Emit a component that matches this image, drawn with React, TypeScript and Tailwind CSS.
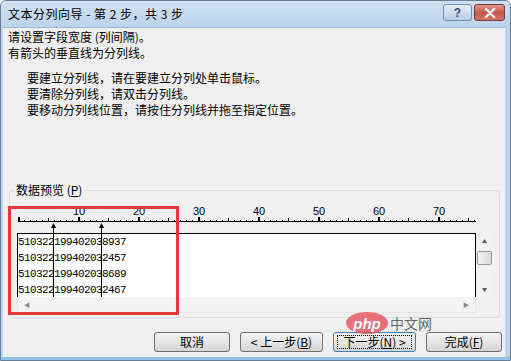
import React from 'react';

const rows = ['510322199402038937', '510322199402032457', '510322199402038689', '510322199402032467'];

// ruler ticks: one per character, 6px apart
function Ruler() {
  const ticks = [];
  for (let i = 0; i <= 76; i++) {
    const x = 2 + i * 6;
    if (i % 10 === 0) {
      ticks.push(<rect key={i} x={x} y={14} width={2} height={4} fill="#000" />);
    } else if (i % 5 === 0) {
      ticks.push(<rect key={i} x={x} y={15} width={1} height={3} fill="#000" />);
    } else {
      ticks.push(<rect key={i} x={x} y={17} width={1} height={1} fill="#000" />);
    }
  }
  const labels = [10, 20, 30, 40, 50, 60, 70];
  return (
    <svg width="462" height="30" className="block">
      <rect x={2} y={18} width={458} height={1} fill="#000" />
      {ticks}
      {labels.map((n) => (
        <text
          key={n}
          x={3 + n * 6}
          y={12}
          textAnchor="middle"
          fontSize="11"
          fontFamily="'Liberation Sans', sans-serif"
          fill="#000"
        >
          {n}
        </text>
      ))}
    </svg>
  );
}

function WinButton({ children, focused, w }: { children: React.ReactNode; focused?: boolean; w: string }) {
  return (
    <button
      className={
        'h-[20px] rounded-[3px] border text-[12px] leading-none text-black flex items-center justify-center bg-gradient-to-b from-[#f4f4f4] via-[#e6e6e6] to-[#d4d4d4] ' +
        w +
        (focused ? ' border-[#3c7fb1]' : ' border-[#707070]')
      }
    >
      {focused ? (
        <span className="border border-dotted border-black h-[14px] flex items-center w-[75px] justify-center">
          {children}
        </span>
      ) : (
        children
      )}
    </button>
  );
}

export default function App() {
  return (
    <div className="relative w-[511px] h-[361px] overflow-hidden bg-[#bcd4ed] border border-[#6a7f97] rounded-t-[6px] font-['Noto_Sans_CJK_SC',sans-serif]">
      {/* Title bar */}
      <div className="h-[26px] flex items-center justify-between pl-[7px] pr-[5px] bg-gradient-to-b from-[#cfe0f2] to-[#bcd3ec]">
        <span className="text-[12px] text-black tracking-[0.5px]">文本分列向导 - 第 2 步，共 3 步</span>
        <div className="flex gap-[2px] self-start mt-[3px]">
          <div className="w-[29px] h-[17px] rounded-[3px] border border-[#6e8db0] bg-gradient-to-b from-[#e4edf7] to-[#b9cde6] flex items-center justify-center text-[12px] font-bold text-[#3b4f66] font-['Liberation_Sans',sans-serif]">
            ?
          </div>
          <div className="w-[31px] h-[17px] rounded-[3px] border border-[#7a3a36] bg-gradient-to-b from-[#e49a8e] via-[#c9574b] to-[#d0706a] flex items-center justify-center">
            <svg width="12" height="10" viewBox="0 0 12 10">
              <path d="M2 1 L10 9 M10 1 L2 9" stroke="#fff" strokeWidth="2.4" strokeLinecap="round" />
            </svg>
          </div>
        </div>
      </div>

      {/* Client area */}
      <div className="ml-[2px] mr-[5px] h-[331px] bg-[#f0f0f0] border-t border-[#9fb6cf] flex flex-col text-[12px] text-black">
        <div className="pl-[5px] pt-[1px] leading-[16px]">
          <div>请设置字段宽度 (列间隔)。</div>
          <div>有箭头的垂直线为分列线。</div>
        </div>
        <div className="pl-[24px] mt-[9px] leading-[16px]">
          <div>要建立分列线，请在要建立分列处单击鼠标。</div>
          <div>要清除分列线，请双击分列线。</div>
          <div>要移动分列线位置，请按住分列线并拖至指定位置。</div>
        </div>

        <fieldset className="ml-[6px] mt-[64px] w-[491px] h-[136px] border border-[#d5dfe5] rounded-[3px]">
          <legend className="ml-[4px] px-[2px] leading-[16px]">
            数据预览 (<span className="underline">P</span>)
          </legend>

          <div className="relative ml-[6px] mt-[5px] w-[478px]">
            <Ruler />
            <div className="flex pl-[1px]">
              <div className="w-[459px] h-[64px] bg-white border-t border-l border-r border-black font-['Liberation_Mono',monospace] text-[11px] tracking-[-0.6px] leading-[16px]">
                {rows.map((r) => (
                  <div key={r}>{r}</div>
                ))}
              </div>
              <div className="w-[17px] h-[64px] bg-[#f2f2f2] flex flex-col items-center">
                <div className="h-[16px] flex items-center justify-center text-[5px] text-[#555]">▲</div>
                <div className="w-[15px] h-[14px] mt-[2px] rounded-[2px] border border-[#9a9a9a] bg-gradient-to-r from-[#f3f3f3] to-[#d8d8d8]" />
                <div className="flex-1" />
                <div className="h-[16px] flex items-center justify-center text-[5px] text-[#555]">▼</div>
              </div>
            </div>
            <div className="ml-[1px] w-[459px] h-[16px] bg-[#f4f4f4] border-x border-b border-[#e6e6e6] flex items-center justify-between px-[6px] text-[6px] text-[#888]">
              <span>◀</span>
              <span>▶</span>
            </div>

            {/* column break arrows */}
            <svg className="absolute left-0 top-0" width="120" height="95">
              <path d="M37.5 20 L35 25 L40 25 Z" fill="#000" />
              <rect x={37} y={22} width={1} height={72} fill="#000" />
              <path d="M85.5 20 L83 25 L88 25 Z" fill="#000" />
              <rect x={85} y={22} width={1} height={72} fill="#000" />
            </svg>
          </div>
        </fieldset>

        <div className="mt-[14px] flex justify-end gap-[10px] pr-[3px]">
          <WinButton w="w-[76px]">取消</WinButton>
          <WinButton w="w-[83px]">
            &lt; 上一步(<span className="underline">B</span>)
          </WinButton>
          <WinButton w="w-[83px]" focused>
            下一步(<span className="underline">N</span>) &gt;
          </WinButton>
          <WinButton w="w-[76px]">
            完成(<span className="underline">F</span>)
          </WinButton>
        </div>
      </div>

      {/* bottom frame */}
      <div className="absolute left-0 right-0 bottom-0 h-[3px] bg-[#8fc3e6]" />

      {/* red highlight */}
      <div className="absolute left-[7px] top-[205px] w-[171px] h-[109px] border-[3px] border-[#e5393b]" />

      {/* watermark */}
      <div className="absolute left-[345px] top-[311px] flex items-center gap-[2px] opacity-80">
        <div className="w-[42px] h-[22px] rounded-[50%] bg-[#e8505b] flex items-center justify-center">
          <span className="text-white italic font-bold text-[15px] leading-none font-['Liberation_Sans',sans-serif]">php</span>
        </div>
        <span className="text-[14px] text-[#444] leading-none">中文网</span>
      </div>
    </div>
  );
}
